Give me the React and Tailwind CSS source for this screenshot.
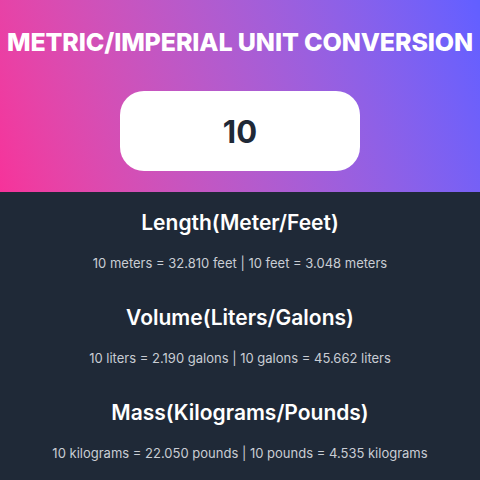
import { useState } from 'react';

const rows = [
  { title: 'Length(Meter/Feet)', a: 'meters', b: 'feet', f: 3.281 },
  { title: 'Volume(Liters/Galons)', a: 'liters', b: 'galons', f: 0.219 },
  { title: 'Mass(Kilograms/Pounds)', a: 'kilograms', b: 'pounds', f: 2.205 },
];

export default function App() {
  const [value, setValue] = useState('10');
  const n = Number(value) || 0;

  return (
    <div className="min-h-[480px] bg-[#1f2937] font-['Inter',sans-serif]">
      <header className="flex h-[192px] flex-col items-center bg-linear-[72deg] from-pink-500 to-indigo-500 pt-[27px]">
        <h1 className="whitespace-nowrap text-[25px] font-extrabold leading-[30px] tracking-[-0.005em] text-white">
          METRIC/IMPERIAL UNIT CONVERSION
        </h1>
        <input
          value={value}
          onChange={(e) => setValue(e.target.value)}
          className="mt-[34px] h-[80px] w-[240px] rounded-[24px] bg-white text-center text-[31px] font-bold text-[#1f2937] outline-none"
        />
      </header>
      <main className="flex flex-col items-center pt-[8px]">
        {rows.map((r) => (
          <section key={r.title} className="flex h-[95px] flex-col items-center">
            <h2 className="mt-[9px] text-[21px] font-semibold leading-[28px] text-white">{r.title}</h2>
            <p className="mt-[16px] text-[13px] leading-[20px] text-[#c9cdd4]">
              {n} {r.a} = {(n * r.f).toFixed(3)} {r.b} | {n} {r.b} = {(n / r.f).toFixed(3)} {r.a}
            </p>
          </section>
        ))}
      </main>
    </div>
  );
}
